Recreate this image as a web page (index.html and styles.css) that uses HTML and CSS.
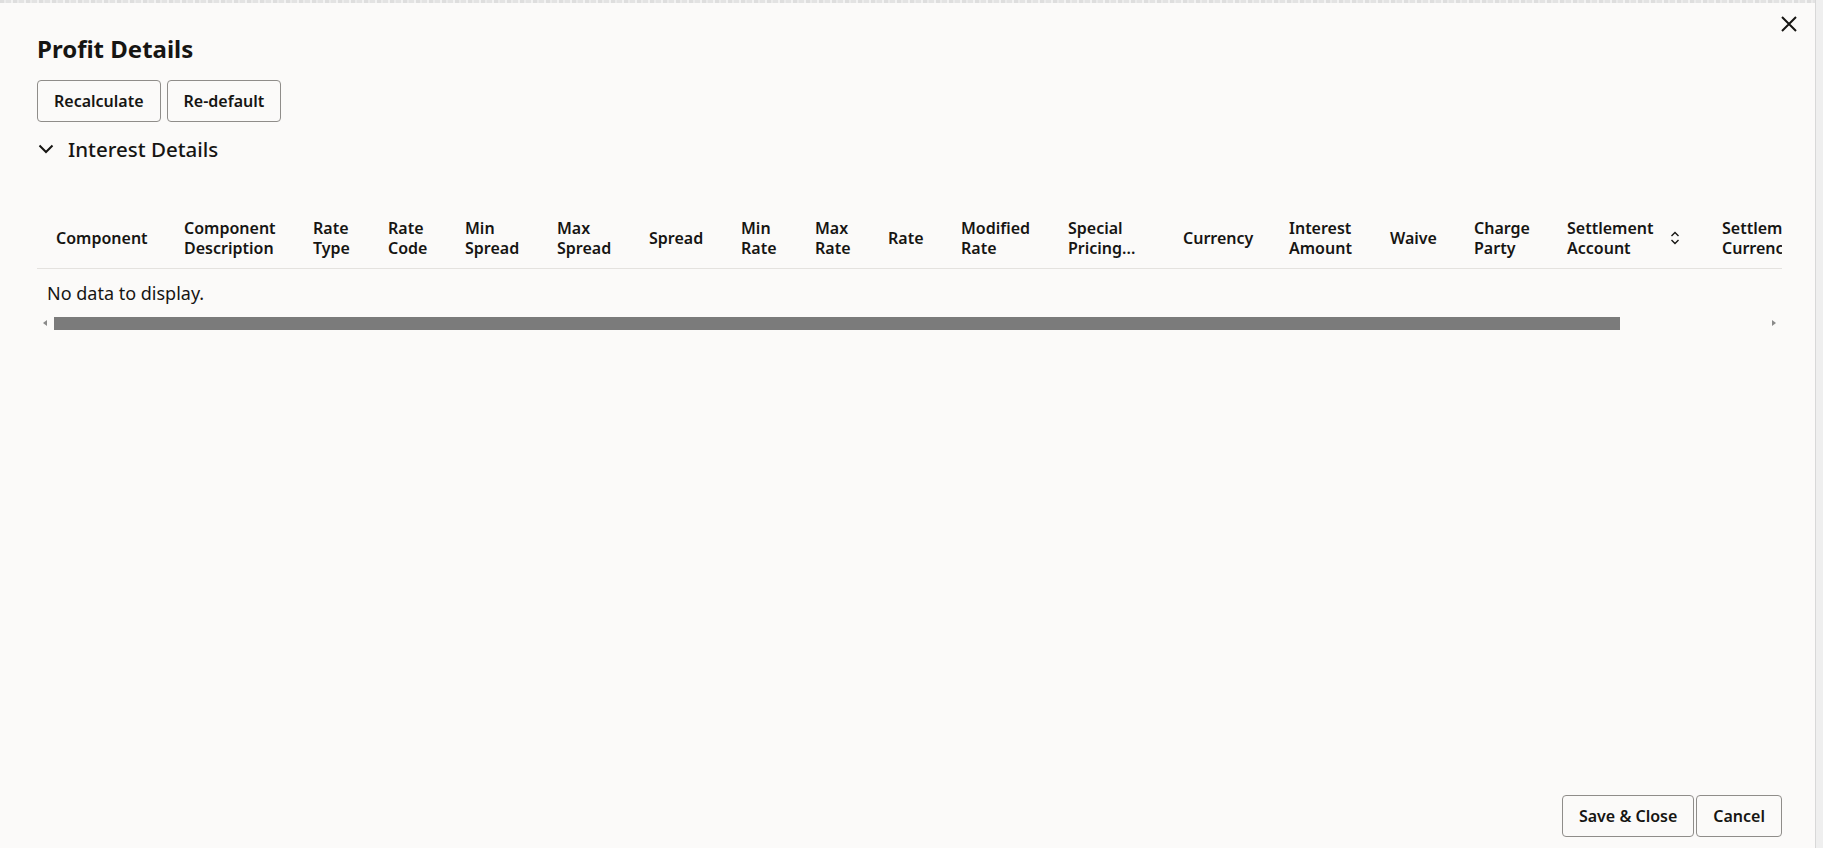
FILE: index.html
```html
<!DOCTYPE html>
<html lang="en">
<head>
  <meta charset="UTF-8" />
  <meta name="viewport" content="width=device-width, initial-scale=1.0"/>
  <title>Profit Details</title>
  <link rel="stylesheet" href="styles.css">
</head>
<body>
  <div class="dialog">
    <div class="top-strip"></div>

    <!-- Header -->
    <div class="dialog-head">
      <h1 class="dialog-title">Profit Details</h1>
      <button class="close-btn" title="Close">
        <svg viewBox="0 0 24 24" width="24" height="24"><path d="M5 5L19 19M19 5L5 19" stroke="#161513" stroke-width="2" fill="none"/></svg>
      </button>
    </div>

    <div class="dialog-body">
      <div class="toolbar">
        <button class="btn">Recalculate</button>
        <button class="btn">Re-default</button>
      </div>

      <div class="section-head">
        <svg viewBox="0 0 16 16" width="16" height="16"><path d="M1.5 4.5L8 11l6.5-6.5" stroke="#161513" stroke-width="2" fill="none"/></svg>
        <span>Interest Details</span>
      </div>

      <div class="table-wrap">
        <table class="grid">
          <colgroup>
            <col class="w128"><col class="w129"><col class="w75"><col class="w77">
            <col class="w92"><col class="w92"><col class="w92"><col class="w74">
            <col class="w73"><col class="w73"><col class="w107"><col class="w115">
            <col class="w106"><col class="w101"><col class="w84"><col class="w93">
            <col class="w155"><col class="w160">
          </colgroup>
          <thead>
            <tr>
              <th>Component</th>
              <th>Component<br>Description</th>
              <th>Rate<br>Type</th>
              <th>Rate<br>Code</th>
              <th>Min<br>Spread</th>
              <th>Max<br>Spread</th>
              <th>Spread</th>
              <th>Min<br>Rate</th>
              <th>Max<br>Rate</th>
              <th>Rate</th>
              <th>Modified<br>Rate</th>
              <th>Special<br>Pricing...</th>
              <th>Currency</th>
              <th>Interest<br>Amount</th>
              <th>Waive</th>
              <th>Charge<br>Party</th>
              <th>
                <div class="sortable">
                  <span>Settlement<br>Account</span>
                  <svg viewBox="0 0 10 14" width="10" height="14"><path d="M1.5 5L5 1.5 8.5 5M1.5 9L5 12.5 8.5 9" stroke="#161513" stroke-width="1.4" fill="none"/></svg>
                </div>
              </th>
              <th>Settlement<br>Currency</th>
            </tr>
          </thead>
        </table>
      </div>
      <div class="no-data">No data to display.</div>

      <div class="hscroll">
        <div class="arrow left"></div>
        <div class="track"><div class="thumb"></div></div>
        <div class="arrow right"></div>
      </div>
    </div>

    <div class="dialog-foot">
      <button class="btn">Save &amp; Close</button>
      <button class="btn">Cancel</button>
    </div>
  </div>
</body>
</html>
```

FILE: styles.css
```css
body {
  margin: 0;
  font-family: 'Noto Sans', sans-serif;
  background-color: #efefef;
  color: #161513;
}

.dialog {
  width: 1816px;
  height: 848px;
  box-sizing: border-box;
  background-color: #fbfaf9;
  border-right: 1px solid #d8d8d8;
  display: flex;
  flex-direction: column;
}

.top-strip {
  height: 3px;
  background: repeating-linear-gradient(90deg, #dedede 0 4px, #ebebeb 4px 6px, #e3e3e3 6px 11px, #f2f2f2 11px 13px);
}

/* Header */
.dialog-head {
  display: flex;
  justify-content: space-between;
  align-items: flex-start;
  padding: 0 14px 0 37px;
}

.dialog-title {
  margin: 30px 0 0;
  font-size: 24px;
  line-height: 32px;
  font-weight: 700;
}

.close-btn {
  margin-top: 9px;
  width: 24px;
  height: 24px;
  padding: 0;
  border: none;
  background: none;
  display: flex;
}

.dialog-body {
  padding: 0 33px 0 37px;
}

.btn {
  height: 42px;
  padding: 0 16px;
  font-family: inherit;
  font-size: 16px;
  font-weight: 600;
  color: #161513;
  background-color: #fbfaf9;
  border: 1px solid #8f8d8a;
  border-radius: 4px;
}

.toolbar {
  display: flex;
  gap: 6px;
  margin-top: 15px;
}

.section-head {
  display: flex;
  align-items: center;
  gap: 14px;
  margin-top: 13px;
  padding-left: 1px;
  font-size: 20.5px;
  line-height: 28px;
  font-weight: 500;
}

/* Table */
.table-wrap {
  margin-top: 44px;
  overflow: hidden;
}

.grid {
  table-layout: fixed;
  border-collapse: collapse;
  width: 1826px;
}

.grid th {
  padding: 11px 19px 10px;
  font-size: 16px;
  line-height: 20px;
  font-weight: 600;
  text-align: left;
  vertical-align: middle;
  white-space: nowrap;
  border-bottom: 1px solid #e4e2df;
}

.sortable {
  display: flex;
  align-items: center;
  gap: 17px;
}

.w73 { width: 73px; }
.w74 { width: 74px; }
.w75 { width: 75px; }
.w77 { width: 77px; }
.w84 { width: 84px; }
.w92 { width: 92px; }
.w93 { width: 93px; }
.w101 { width: 101px; }
.w106 { width: 106px; }
.w107 { width: 107px; }
.w115 { width: 115px; }
.w128 { width: 128px; }
.w129 { width: 129px; }
.w155 { width: 155px; }
.w160 { width: 160px; }

.no-data {
  padding: 12px 10px 0;
  font-size: 18px;
  line-height: 24px;
}

/* Horizontal scrollbar */
.hscroll {
  display: flex;
  align-items: center;
  height: 13px;
  margin-top: 12px;
}

.hscroll .arrow {
  width: 17px;
  height: 13px;
  position: relative;
}

.hscroll .arrow::after {
  content: "";
  position: absolute;
  top: 3px;
  border-top: 3.5px solid transparent;
  border-bottom: 3.5px solid transparent;
}

.hscroll .left::after {
  left: 6px;
  border-right: 4px solid #8a8a8a;
}

.hscroll .right::after {
  left: 7px;
  border-left: 4px solid #8a8a8a;
}

.hscroll .track {
  flex: 1;
  height: 13px;
}

.hscroll .thumb {
  width: 91.5%;
  height: 100%;
  background-color: #7b7b7b;
}

/* Footer */
.dialog-foot {
  margin-top: auto;
  display: flex;
  justify-content: flex-end;
  gap: 2px;
  padding: 0 33px 11px 0;
}
```
